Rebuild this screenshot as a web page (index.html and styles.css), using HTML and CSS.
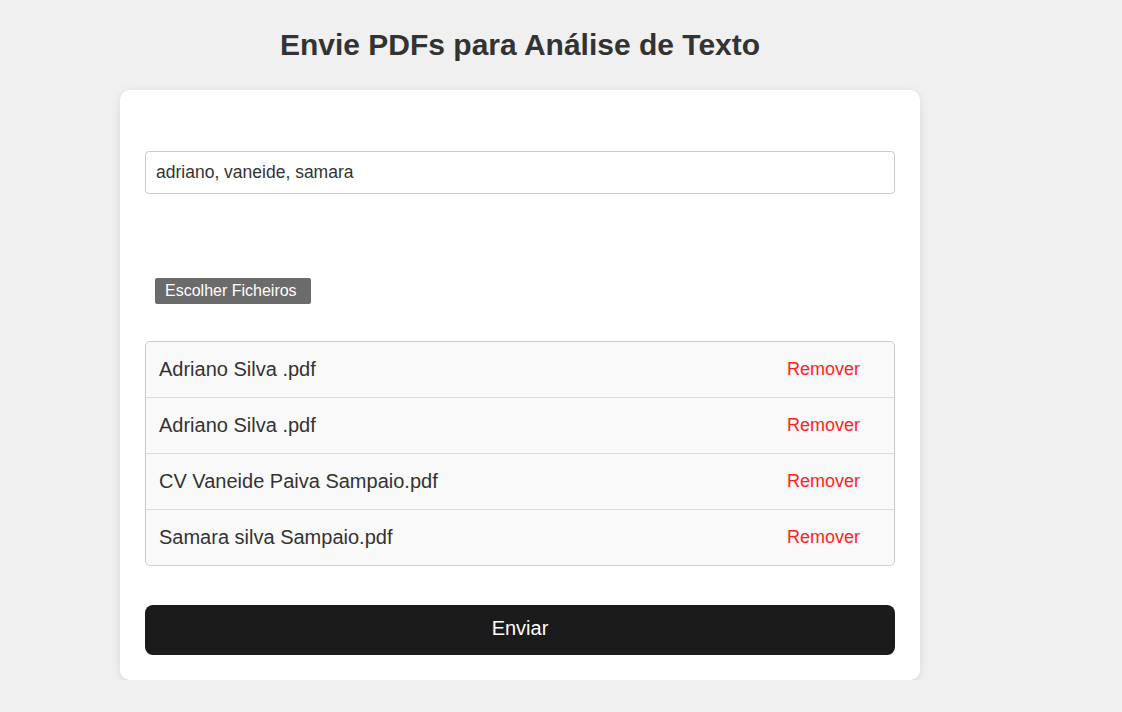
FILE: index.html
```html
<!DOCTYPE html>
<html lang="pt">
<head>
<meta charset="utf-8">
<title>Envie PDFs para Análise de Texto</title>
<link rel="stylesheet" href="styles.css">
</head>
<body>
<main class="page">
  <h1 class="title">Envie PDFs para Análise de Texto</h1>
  <form class="card">
    <input class="text-input" type="text" value="adriano, vaneide, samara">
    <div class="file-row">
      <span class="file-btn">Escolher Ficheiros</span>
    </div>
    <ul class="file-list">
      <li class="file-item"><span class="file-name">Adriano Silva .pdf</span><span class="remove">Remover</span></li>
      <li class="file-item"><span class="file-name">Adriano Silva .pdf</span><span class="remove">Remover</span></li>
      <li class="file-item"><span class="file-name">CV Vaneide Paiva Sampaio.pdf</span><span class="remove">Remover</span></li>
      <li class="file-item"><span class="file-name">Samara silva Sampaio.pdf</span><span class="remove">Remover</span></li>
    </ul>
    <button class="submit" type="button">Enviar</button>
  </form>
</main>
</body>
</html>
```

FILE: styles.css
```css
* { box-sizing: border-box; }
html, body { margin: 0; padding: 0; }
body {
  background: #f0f0f0;
  font-family: "Liberation Sans", Arial, sans-serif;
  color: #333;
}
.page {
  width: 800px;
  margin-left: 120px;
  padding-top: 24px;
}
.title {
  margin: 0 0 24px 0;
  text-align: center;
  font-size: 30px;
  line-height: 42px;
  font-weight: bold;
  color: #333;
}
.card {
  background: #fff;
  border-radius: 10px;
  box-shadow: 0 2px 10px rgba(0,0,0,0.1);
  padding: 61px 25px 25px 25px;
  display: flex;
  flex-direction: column;
}
.text-input {
  height: 43px;
  width: 100%;
  border: 1px solid #ccc;
  border-radius: 4px;
  padding: 0 10px;
  font-family: inherit;
  font-size: 17.5px;
  color: #333;
  background: #fff;
  outline: none;
}
.file-row {
  display: flex;
  padding: 84px 10px 0 10px;
}
.file-btn {
  background: #6b6b6b;
  color: #fff;
  font-size: 16px;
  line-height: 18px;
  padding: 4px 14px 4px 10px;
  border-radius: 2px;
}
.file-list {
  list-style: none;
  margin: 37px 0 0 0;
  padding: 0;
  border: 1px solid #ccc;
  border-radius: 5px;
  background: #f9f9f9;
}
.file-item {
  display: flex;
  align-items: center;
  justify-content: space-between;
  height: 56px;
  padding: 0 34px 0 13px;
  border-bottom: 1px solid #ddd;
}
.file-item:last-child { border-bottom: none; height: 55px; }
.file-name {
  font-size: 20px;
  color: #333;
}
.remove {
  font-size: 18px;
  color: #f22;
}
.submit {
  margin-top: 39px;
  height: 50px;
  padding: 0 0 3px 0;
  border: none;
  border-radius: 8px;
  background: #1b1b1b;
  color: #fff;
  font-family: inherit;
  font-size: 20px;
}
```
